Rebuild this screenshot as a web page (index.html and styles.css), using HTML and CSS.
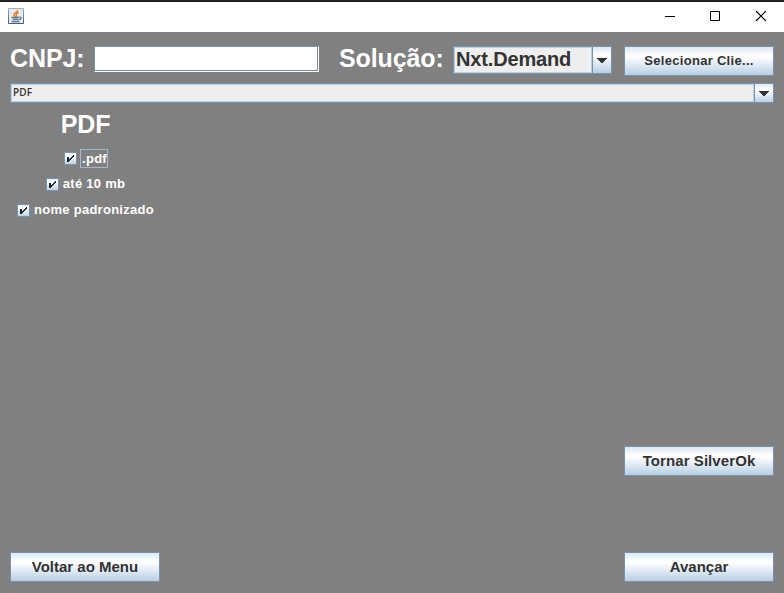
FILE: index.html
```html
<!DOCTYPE html>
<html lang="pt-BR">
<head>
<meta charset="utf-8">
<title>PDF</title>
<link rel="stylesheet" href="styles.css">
</head>
<body>
<div class="window">
  <header class="titlebar">
    <svg class="java" width="16" height="16" viewBox="0 0 16 16">
      <defs><linearGradient id="tile" x1="0" y1="0" x2="0" y2="1"><stop offset="0" stop-color="#9eb2c2"/><stop offset="1" stop-color="#3c5a75"/></linearGradient></defs>
      <rect width="16" height="16" rx="1" fill="url(#tile)"/>
      <rect x="1" y="1" width="14" height="14" fill="#e6ebef"/>
      <path d="M9.7 2C9.9 4.4 5.6 4.8 5.9 7c.2 1 1.2 1.3 1.5 2M10.8 4.4C9.5 5 7.9 5.8 8.1 7c.1.8.9.9.4 2" fill="none" stroke="#f07c18" stroke-width="1.4"/>
      <path d="M3.5 9.5h7.3M4.8 11.4h5.4M3.5 13.5h8M11 9.2c3.2-.6 2.6 2.2-.4 2.5" fill="none" stroke="#567a96" stroke-width="1.3"/>
    </svg>
    <div class="controls">
      <svg width="12" height="12" viewBox="0 0 12 12"><path d="M0 6.5h10" stroke="#000"/></svg>
      <svg width="12" height="12" viewBox="0 0 12 12"><path d="M.5 1.5h9v9h-9z" fill="none" stroke="#000"/></svg>
      <svg width="12" height="12" viewBox="0 0 12 12"><path d="M1 1l10 10M11 1L1 11" stroke="#000" stroke-width="1.1"/></svg>
    </div>
  </header>
  <main class="content">
    <div class="fields">
      <label class="heading cnpj" for="cnpj">CNPJ:</label>
      <input class="cnpj-input" id="cnpj" type="text">
      <span class="heading solution">Solução:</span>
      <div class="combo combo-large">
        <span class="combo-value">Nxt.Demand</span>
        <span class="combo-arrow"><svg width="10" height="5" viewBox="0 0 10 5" shape-rendering="crispEdges"><path d="M0 0h10v1H9v1H8v1H7v1H6v1H4V4H3V3H2V2H1V1H0z" fill="#333"/></svg></span>
      </div>
      <button class="button button-client">Selecionar Clie...</button>
    </div>
    <div class="combo combo-small">
      <span class="combo-value">PDF</span>
      <span class="combo-arrow"><svg width="10" height="5" viewBox="0 0 10 5" shape-rendering="crispEdges"><path d="M0 0h10v1H9v1H8v1H7v1H6v1H4V4H3V3H2V2H1V1H0z" fill="#333"/></svg></span>
    </div>
    <section class="checks">
      <h1 class="heading">PDF</h1>
      <div class="check"><svg class="box" width="13" height="13" viewBox="0 0 13 13"><use href="#checkmark"/></svg><span class="focused">.pdf</span></div>
      <div class="check"><svg class="box" width="13" height="13" viewBox="0 0 13 13"><use href="#checkmark"/></svg><span>até 10 mb</span></div>
      <div class="check"><svg class="box" width="13" height="13" viewBox="0 0 13 13"><use href="#checkmark"/></svg><span>nome padronizado</span></div>
    </section>
    <div class="actions">
      <button class="button button-silver">Tornar SilverOk</button>
      <div class="nav">
        <button class="button">Voltar ao Menu</button>
        <button class="button">Avançar</button>
      </div>
    </div>
  </main>
</div>
<svg class="symbols" width="0" height="0">
  <defs>
    <linearGradient id="boxfill" x1="0" y1="0" x2="0" y2="1"><stop offset="0" stop-color="#e2edf7"/><stop offset=".3" stop-color="#fff"/><stop offset="1" stop-color="#b8cfe5"/></linearGradient>
    <g id="checkmark">
      <path d="M.5.5h12v12H.5z" fill="url(#boxfill)" stroke="#7893ae"/>
      <path d="M3 5h2v2h1V6h1V5h1V4h1V3h1v2H9v1H8v1H7v1H6v1H5v1H3z" fill="#222"/>
    </g>
  </defs>
</svg>
</body>
</html>
```

FILE: styles.css
```css
* { box-sizing: border-box; }
body {
  margin: 0;
  font-family: "Liberation Sans", Arial, sans-serif;
  font-weight: bold;
  color: #333;
}
.window {
  display: flex;
  flex-direction: column;
  width: 784px;
  height: 593px;
  overflow: hidden;
  background: #808080;
}
.titlebar {
  display: flex;
  justify-content: space-between;
  align-items: flex-start;
  height: 32px;
  padding: 6px 17px 0 8px;
  border-top: 2px solid #232122;
  background: #fff;
}
.controls { display: flex; gap: 33px; padding-top: 2px; }
.controls svg, .java, .box, .combo-arrow svg { display: block; flex: none; }
.content {
  display: flex;
  flex: 1;
  flex-direction: column;
  padding: 14px 10px 11px;
}
.fields { display: flex; align-items: flex-start; height: 37px; }
.heading {
  margin: 0;
  font-size: 25px;
  line-height: 26px;
  font-weight: bold;
  color: #fff;
}
.cnpj { width: 84px; line-height: 24px; letter-spacing: -.1px; }
.cnpj-input {
  width: 225px;
  height: 26px;
  padding: 0;
  border: 1px solid #7893ae;
  border-right-color: #fff;
  border-bottom-color: #fff;
  border-radius: 0;
  outline: 0;
  background: #fff;
  box-shadow: inset -1px -1px #7a8a99;
}
.solution { width: 134px; padding-left: 20px; line-height: 24px; letter-spacing: -.12px; white-space: nowrap; }
.combo { display: flex; border: 1px solid #7893ae; background: #eee; }
.combo-value {
  flex: 1;
  border: 1px solid #b8cfe5;
  white-space: nowrap;
}
.combo-arrow {
  display: flex;
  align-items: center;
  justify-content: center;
  width: 19px;
  padding-right: 1px;
  border-left: 1px solid #7893ae;
  background: linear-gradient(#dde8f3, #fff 30%, #fff 35%, #b8cfe5);
}
.combo-large { width: 159px; height: 28px; }
.combo-large .combo-value { padding-left: 1px; font-size: 20px; line-height: 23px; letter-spacing: -.15px; }
.combo-small { flex: none; height: 20px; }
.combo-small .combo-value {
  padding-left: 1px;
  font: 600 10px/15px "Open Sans", sans-serif;
  letter-spacing: .1px;
}
.button {
  width: 150px;
  height: 30px;
  padding: 0;
  border: 1px solid #7893ae;
  border-radius: 0;
  background: linear-gradient(#dde8f3, #fff 30%, #fff 35%, #b8cfe5);
  font: bold 15px/28px "Liberation Sans", Arial, sans-serif;
  color: #333;
  white-space: nowrap;
}
.button-client { margin-left: 12px; font-size: 13px; letter-spacing: .3px; }
.button-silver { letter-spacing: .08px; }
.checks {
  display: flex;
  flex-direction: column;
  align-items: center;
  width: 151px;
  padding-top: 8px;
}
.checks .heading { margin-bottom: 8px; letter-spacing: -.2px; }
.check {
  display: flex;
  align-items: center;
  height: 26px;
  font-size: 13px;
  line-height: 16px;
  letter-spacing: .27px;
  color: #fff;
  white-space: nowrap;
}
.check span { margin-left: 4px; }
.check .focused { padding: 1px 0 0 1px; outline: 1px solid #a3b8cc; }
.actions {
  display: flex;
  flex-direction: column;
  align-items: flex-end;
  gap: 76px;
  margin-top: auto;
}
.nav { display: flex; justify-content: space-between; width: 100%; }
.symbols { position: absolute; }
```
